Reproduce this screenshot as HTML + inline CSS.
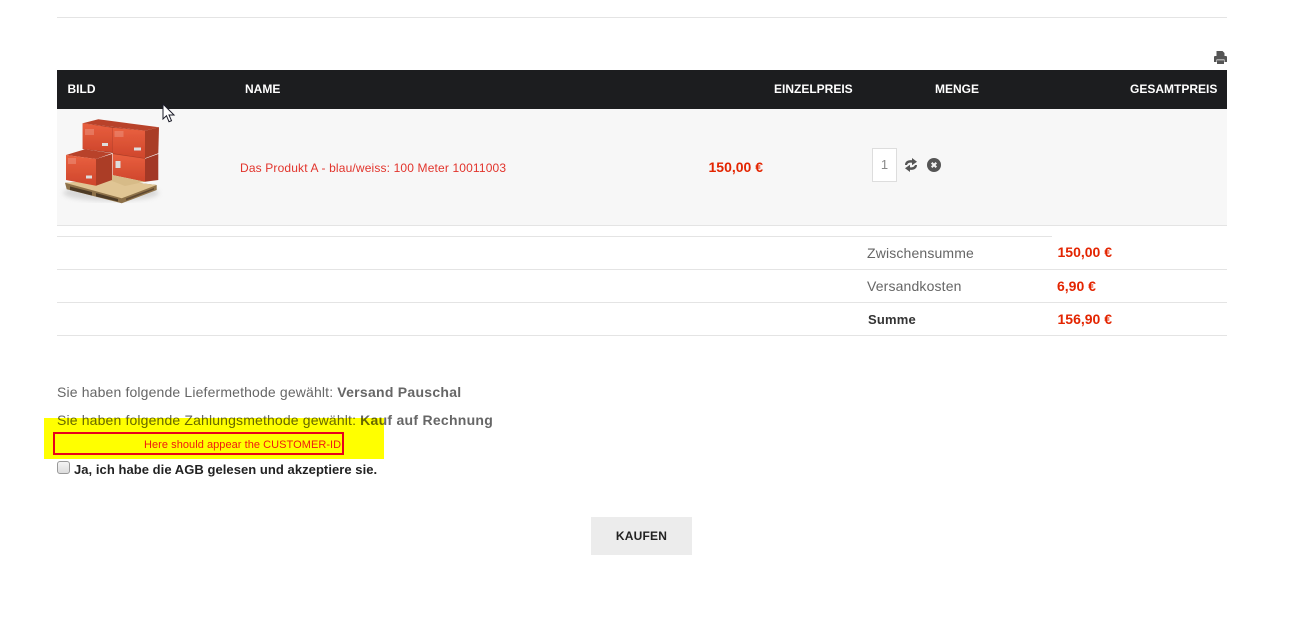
<!DOCTYPE html>
<html><head><meta charset="utf-8"><style>
html,body{margin:0;padding:0;background:#fff;width:1295px;height:620px;overflow:hidden}
body{position:relative;font-family:"Liberation Sans",Arial,sans-serif}
.t{position:absolute;white-space:nowrap;line-height:16px}
.r{position:absolute;background:#e4e4e4;height:1px}
.h{color:#fff;font-weight:bold;font-size:12px;top:81px}
.p{color:#e32400;font-weight:bold;font-size:14px}
.g{color:#666;font-size:14px;letter-spacing:.15px}
.g b{letter-spacing:.27px}
</style></head><body>
<div class="r" style="left:57px;top:17px;width:1170px"></div>
<svg style="position:absolute;left:1213px;top:50px" width="15" height="15" viewBox="0 0 15 15"><path fill="#555" d="M3.500 1h6l2 2v3h-8zM2 6h11a1 1 0 0 1 1 1v5h-2.500v-2.500h-8V12H1V7a1 1 0 0 1 1-1zM4 10.300h7V14H4z"/></svg>
<div style="position:absolute;left:57px;top:70px;width:1170px;height:39px;background:#1c1d1f"></div>
<div class="t h" style="left:67.500px">BILD</div>
<div class="t h" style="left:245px">NAME</div>
<div class="t h" style="left:774px">EINZELPREIS</div>
<div class="t h" style="left:935px">MENGE</div>
<div class="t h" style="left:1130px">GESAMTPREIS</div>
<div style="position:absolute;left:57px;top:109px;width:1170px;height:116px;background:#f7f7f7"></div>
<div class="r" style="left:57px;top:225px;width:1170px"></div>
<svg style="position:absolute;left:0;top:0" width="240" height="215">
<defs><filter id="b"><feGaussianBlur stdDeviation="2.500"/></filter><filter id="s"><feGaussianBlur stdDeviation=".35"/></filter>
<linearGradient id="f" x1="0" y1="0" x2="0" y2="1"><stop offset="0" stop-color="#e9603f"/><stop offset="1" stop-color="#cf462c"/></linearGradient></defs>
<ellipse cx="111" cy="193" rx="48" ry="8" fill="#aaa" opacity=".4" filter="url(#b)"/>
<g filter="url(#s)">
<polygon points="65,182.700 113,180 156.700,185 156.700,190 121.700,203.300 66.700,189.300" fill="#8d7148"/>
<polygon points="65,182.700 113,180 156.700,185 121.700,198.300" fill="#e0c594"/>
<polygon points="70,186.500 92,192 92,195.500 70,190" fill="#4d3b25"/>
<polygon points="96,193 118,199 118,201.500 96,196.500" fill="#4d3b25"/>
<polygon points="126,198.500 154,188 154,189.500 126,200.500" fill="#5e4830"/>
<polygon points="82.700,123.300 145,130.700 145,181.700 112.700,175 112.700,153 82.700,149" fill="#a93c28"/>
<polygon points="82.700,123.300 98.300,119.300 159,127.300 145,130.700" fill="#b8432b"/>
<polygon points="82.700,123.300 112.300,127.700 112.300,152 82.700,149" fill="url(#f)"/>
<polygon points="112.700,127.700 145,130.700 145,158.300 112.700,153.300" fill="url(#f)"/>
<polygon points="145,130.700 159,127.300 158.300,153.300 145,158.300" fill="#a93c28"/>
<polygon points="112.700,154 145,158.700 145,181.700 112.700,175" fill="url(#f)"/>
<polygon points="145,158.700 158.300,154 158.300,180 145,181.700" fill="#a33825"/>
<polygon points="112,175 145,181.700 125,186 112,181" fill="#d7bb88"/>
<polygon points="66,155 85,149.300 112,153.300 96,159" fill="#b8432b"/>
<polygon points="66,155 96,159 96,185.700 66,180" fill="url(#f)"/>
<polygon points="96,159 112,154 112,180 96,185.700" fill="#ab3d28"/>
<rect x="86" y="175.500" width="6" height="3" fill="#ddd"/>
<rect x="134" y="147.500" width="7" height="3" fill="#ddd"/>
<rect x="102" y="143" width="6" height="3" fill="#ddd"/>
<rect x="115.500" y="161" width="5" height="7" fill="#ddd"/>
<rect x="68" y="158" width="8" height="6" fill="#f0a593" opacity=".4"/>
<rect x="85" y="129" width="9" height="6" fill="#f0a593" opacity=".4"/>
<rect x="114.500" y="131" width="9" height="6" fill="#f0a593" opacity=".4"/>
</g></svg>
<div class="t" style="left:240px;top:160px;font-size:12px;color:#e2342c;letter-spacing:.15px">Das Produkt A - blau/weiss: 100 Meter 10011003</div>
<div class="t p" style="left:708.500px;top:159px">150,00 €</div>
<div style="position:absolute;left:872px;top:148px;width:23px;height:32px;background:#fff;border:1px solid #ddd;color:#888;font-size:13px;line-height:32px;text-align:center">1</div>
<svg style="position:absolute;left:904px;top:157px" width="14" height="16" viewBox="0 0 14 16"><path fill="#555" d="M1 8C1 4.500 4 2.700 8 3.300V1l5 3.700-5 3.600V5.800C5.500 5.400 3.800 6 3 8zM13 8c0 3.500-3 5.300-7 4.700V15L1 11.300l5-3.600v2.500c2.500.4 4.200-.2 5-2.200z"/></svg>
<svg style="position:absolute;left:927px;top:158px" width="14" height="14" viewBox="0 0 14 14"><circle cx="7" cy="7" r="7" fill="#555"/><path d="M4.700 4.700l4.600 4.600M9.300 4.700l-4.600 4.600" stroke="#f2f2f2" stroke-width="2.100"/></svg>
<div class="r" style="left:57px;top:236px;width:995px"></div>
<div class="r" style="left:57px;top:269px;width:1170px"></div>
<div class="r" style="left:57px;top:302px;width:1170px"></div>
<div class="r" style="left:57px;top:335px;width:1170px"></div>
<div class="t g" style="left:867px;top:245px">Zwischensumme</div>
<div class="t g" style="left:867px;top:278px">Versandkosten</div>
<div class="t" style="left:868px;top:312px;font-size:13px;font-weight:bold;color:#333;letter-spacing:.2px">Summe</div>
<div class="t p" style="left:1057.500px;top:244px">150,00 €</div>
<div class="t p" style="left:1057px;top:278px">6,90 €</div>
<div class="t p" style="left:1057.500px;top:311px">156,90 €</div>
<div class="t g" style="left:57px;top:384px">Sie haben folgende Liefermethode gewählt: <b>Versand Pauschal</b></div>
<div class="t g" style="left:57px;top:412px">Sie haben folgende Zahlungsmethode gewählt: <b>Kauf auf Rechnung</b></div>
<div style="position:absolute;left:44px;top:418px;width:340px;height:41px;background:#ff0;mix-blend-mode:multiply"></div>
<div style="position:absolute;left:53px;top:432px;width:287px;height:19px;border:2px solid #e8001c"></div>
<div class="t" style="left:144px;top:437px;font-size:11px;color:#f01a10;letter-spacing:.05px">Here should appear the CUSTOMER-ID</div>
<div style="position:absolute;left:57px;top:461px;width:11px;height:11px;border:1px solid #999;border-radius:3px;background:linear-gradient(#f4f4f4,#ddd)"></div>
<div class="t" style="left:74px;top:462px;font-size:13px;font-weight:bold;color:#222;letter-spacing:.05px">Ja, ich habe die AGB gelesen und akzeptiere sie.</div>
<div style="position:absolute;left:591px;top:517px;width:101px;height:38px;background:#ececec;color:#222;font-size:12px;font-weight:bold;line-height:39px;text-align:center;letter-spacing:.2px">KAUFEN</div>
<svg style="position:absolute;left:162px;top:103px" width="14" height="20" viewBox="0 0 14 20"><path d="M1 1v15l3.500-3.300 2.500 6 2.500-1-2.500-5.700H12z" fill="#fff" stroke="#1b1c28" stroke-width="1"/></svg>
</body></html>
